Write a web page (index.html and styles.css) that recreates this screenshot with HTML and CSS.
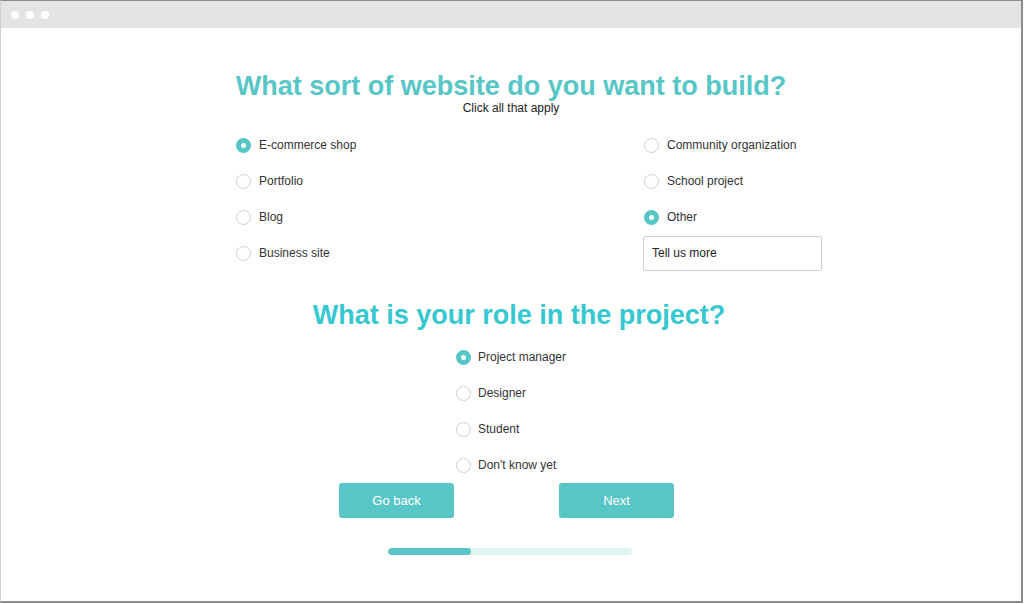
FILE: index.html
```html
<!DOCTYPE html>
<html>
<head>
<meta charset="utf-8">
<link rel="stylesheet" href="styles.css">
</head>
<body>
<div class="window">
  <div class="topbar">
    <span class="dot"></span><span class="dot"></span><span class="dot"></span>
  </div>
  <div class="content">
    <h1 class="title">What sort of website do you want to build?</h1>
    <p class="subtitle">Click all that apply</p>
    <div class="options">
      <div class="col col-left">
        <label class="opt"><span class="radio checked"></span>E-commerce shop</label>
        <label class="opt"><span class="radio"></span>Portfolio</label>
        <label class="opt"><span class="radio"></span>Blog</label>
        <label class="opt"><span class="radio"></span>Business site</label>
      </div>
      <div class="col col-right">
        <label class="opt"><span class="radio"></span>Community organization</label>
        <label class="opt"><span class="radio"></span>School project</label>
        <label class="opt"><span class="radio checked"></span>Other</label>
        <div class="opt"><div class="more">Tell us more</div></div>
      </div>
    </div>
    <h2 class="title title2">What is your role in the project?</h2>
    <div class="roles">
      <label class="opt"><span class="radio checked"></span>Project manager</label>
      <label class="opt"><span class="radio"></span>Designer</label>
      <label class="opt"><span class="radio"></span>Student</label>
      <label class="opt"><span class="radio"></span>Don't know yet</label>
    </div>
    <div class="actions">
      <button class="btn">Go back</button>
      <button class="btn">Next</button>
    </div>
    <div class="progress"><div class="fill" style="width:34%"></div></div>
  </div>
</div>
</body>
</html>
```
FILE: styles.css
```css
* { box-sizing: border-box; }
html, body { margin: 0; padding: 0; background: #fff; }
body { font-family: "Liberation Sans", Arial, sans-serif; color: #333; }
.window {
  width: 1023px;
  height: 603px;
  border-top: 1px solid #8c8c8c;
  border-right: 2px solid #8c8c8c;
  border-bottom: 2px solid #8c8c8c;
  border-left: 1px solid #d0d0d0;
  background: #fff;
}
.topbar {
  height: 27px;
  background: #e4e4e4;
  display: flex;
  align-items: center;
  gap: 7px;
  padding-left: 10px;
}
.dot { width: 8px; height: 8px; border-radius: 50%; background: #fff; }
.content { padding-top: 43px; }
.title {
  margin: 0;
  text-align: center;
  font-size: 27px;
  line-height: 30px;
  font-weight: bold;
  color: #56c6c6;
}
.title2 { color: #36c8d0; margin-top: 29px; padding-left: 16px; }
.subtitle {
  margin: 0;
  text-align: center;
  font-size: 12px;
  line-height: 14px;
  color: #222;
}
.options {
  display: flex;
  justify-content: space-between;
  width: 586px;
  margin: 12px 0 0 235px;
}
.col { display: flex; flex-direction: column; }
.col-right { width: 179px; }
.col-right .opt { padding-left: 1px; }
.col-right .opt:last-child { padding-left: 0; }
.opt {
  height: 36px;
  display: flex;
  align-items: center;
  gap: 8px;
  font-size: 12px;
  color: #333;
}
.radio {
  width: 15px;
  height: 15px;
  border-radius: 50%;
  border: 1.5px solid #cfcfcf;
  background: #fff;
  flex: none;
}
.radio.checked { border: 5px solid #56c6c6; }
.more {
  width: 179px;
  height: 35px;
  border: 1.5px solid #cfcfcf;
  border-radius: 2px;
  display: flex;
  align-items: center;
  padding-left: 8px;
  font-size: 12px;
  color: #222;
}
.roles { margin: 9px 0 0 455px; display: flex; flex-direction: column; }
.roles .opt { gap: 7px; }
.actions {
  width: 335px;
  margin-left: 338px;
  display: flex;
  justify-content: space-between;
}
.btn {
  width: 115px;
  height: 35px;
  border: none;
  border-radius: 3px;
  background: #58c6c6;
  color: #fff;
  font-family: "Liberation Sans", Arial, sans-serif;
  font-size: 13px;
}
.progress {
  width: 244px;
  height: 7px;
  margin: 30px 0 0 387px;
  background: #dff3f2;
  border-radius: 4px;
  overflow: hidden;
}
.fill { height: 100%; background: #58c6c6; border-radius: 4px; }
```
